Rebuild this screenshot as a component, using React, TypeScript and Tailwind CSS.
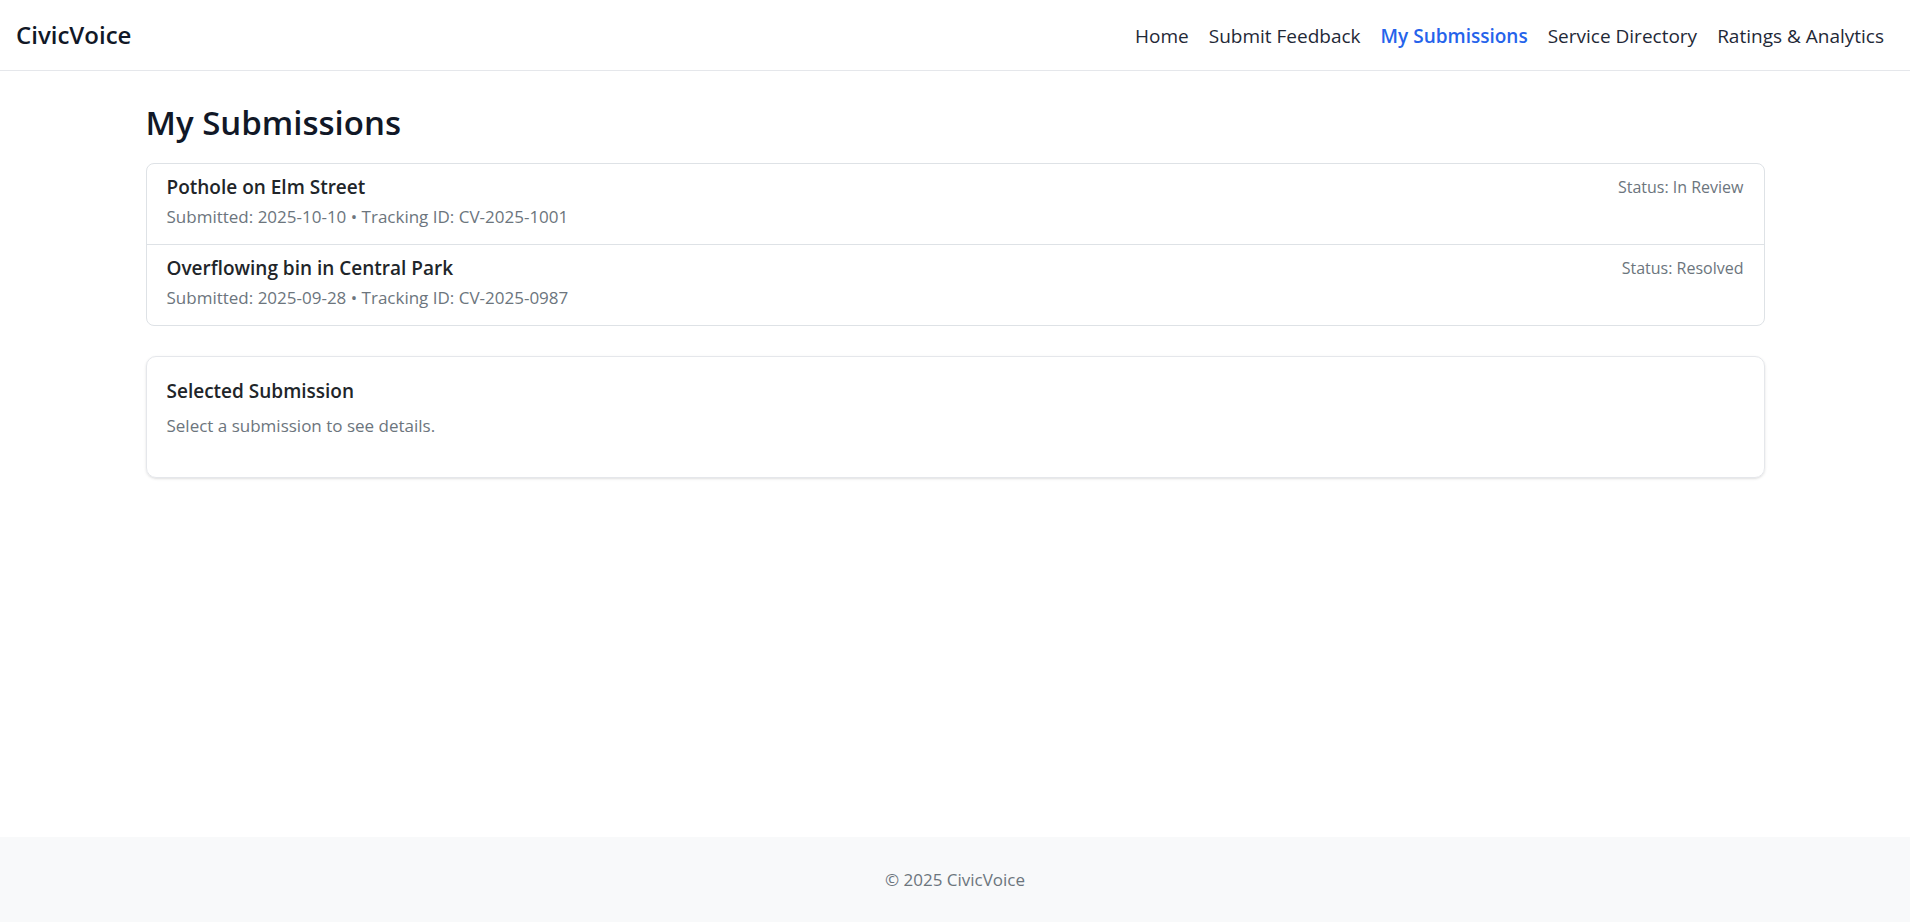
const navItems = ["Home", "Submit Feedback", "My Submissions", "Service Directory", "Ratings & Analytics"];

const submissions = [
  { id: "CV-2025-1001", title: "Pothole on Elm Street", date: "2025-10-10", status: "In Review" },
  { id: "CV-2025-0987", title: "Overflowing bin in Central Park", date: "2025-09-28", status: "Resolved" },
];

export default function App() {
  return (
    <div
      className="min-h-screen flex flex-col bg-white text-[#212529]"
      style={{ fontFamily: '"Open Sans", "Noto Sans", sans-serif' }}
    >
      <header className="h-[71px] flex items-center justify-between border-b border-[#e5e7eb] pl-4 pr-[26px]">
        <a className="text-[24px] font-semibold text-[#111827]">CivicVoice</a>
        <nav className="flex items-center gap-5 pt-[2px] text-[19px]">
          {navItems.map((item) => (
            <a
              key={item}
              className={item === "My Submissions" ? "font-semibold text-[#2563eb]" : "text-[#1f2937]"}
            >
              {item}
            </a>
          ))}
        </nav>
      </header>

      <main className="flex-1 w-[1619px] mx-auto pt-[32px]">
        <h1 className="text-[33px] font-semibold leading-[1.2] text-[#111827]">My Submissions</h1>

        <ul className="mt-[20px] rounded-[8px] border border-[#dee2e6]">
          {submissions.map((s, i) => (
            <li
              key={s.id}
              className={
                "flex justify-between px-5 pt-[9px] pb-[13px]" + (i > 0 ? " border-t border-[#dee2e6]" : "")
              }
            >
              <div className="leading-[29px]">
                <div className="text-[19px] font-semibold text-[#212529]">{s.title}</div>
                <div className="text-[17px] text-[#6c757d]">
                  Submitted: {s.date} • Tracking ID: {s.id}
                </div>
              </div>
              <div className="text-[16px] leading-[29px] text-[#6c757d]">Status: {s.status}</div>
            </li>
          ))}
        </ul>

        <section className="mt-[30px] rounded-[10px] border border-[#e5e7eb] shadow-sm px-5 pt-[23px] pb-[37px]">
          <h2 className="text-[19px] font-semibold leading-[1.2] text-[#212529]">Selected Submission</h2>
          <p className="mt-[9px] text-[17px] leading-[29px] text-[#6c757d]">Select a submission to see details.</p>
        </section>
      </main>

      <footer className="h-[85px] flex items-center justify-center bg-[#f8f9fa] text-[17px] text-[#6c757d]">
        © 2025 CivicVoice
      </footer>
    </div>
  );
}
